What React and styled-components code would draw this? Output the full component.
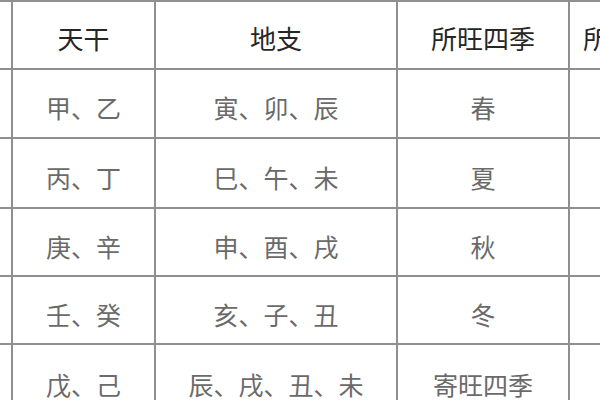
import React from 'react'
import styled, { createGlobalStyle } from 'styled-components'

const GlobalStyle = createGlobalStyle`
    html, body {
        margin: 0;
        padding: 0;
        background: #ffffff;
        overflow: hidden;
    }
    body {
        width: 600px;
        height: 400px;
    }
`;

const header = ['', '天干', '地支', '所旺四季', '所旺四季']

const rows = [
    ['甲、乙', '寅、卯、辰', '春'],
    ['丙、丁', '巳、午、未', '夏'],
    ['庚、辛', '申、酉、戌', '秋'],
    ['壬、癸', '亥、子、丑', '冬'],
    ['戊、己', '辰、戌、丑、未', '寄旺四季'],
]

function App() {
    return (
        <>
            <GlobalStyle />
            <TableGrid>
                {header.map((h, i) => (
                    <Cell key={'h' + i} head>{h}</Cell>
                ))}
                {rows.map((r, ri) => (
                    <React.Fragment key={ri}>
                        <Cell />
                        {r.map((c, ci) => (
                            <Cell key={ci}>{c}</Cell>
                        ))}
                        <Cell />
                    </React.Fragment>
                ))}
            </TableGrid>
        </>
    )
}

const TableGrid = styled.div`
    display: grid;
    grid-template-columns: 11px 141px 240px 170px 130px;
    grid-template-rows: 66px 67px 68px 66px 66px 70px;
    gap: 2px;
    border-top: 2px solid #8f8f8f;
    background: #8f8f8f;
    width: max-content;
`;

const Cell = styled.div`
    background: #ffffff;
    display: flex;
    align-items: center;
    justify-content: center;
    padding-top: ${props => props.head ? '4px' : '7px'};
    box-sizing: border-box;
    white-space: nowrap;
    overflow: hidden;
    font-family: "Noto Sans CJK SC", "Noto Sans", sans-serif;
    font-size: ${props => props.head ? '26px' : '25px'};
    color: ${props => props.head ? '#262626' : '#6a6a6a'};
`;

export default App
